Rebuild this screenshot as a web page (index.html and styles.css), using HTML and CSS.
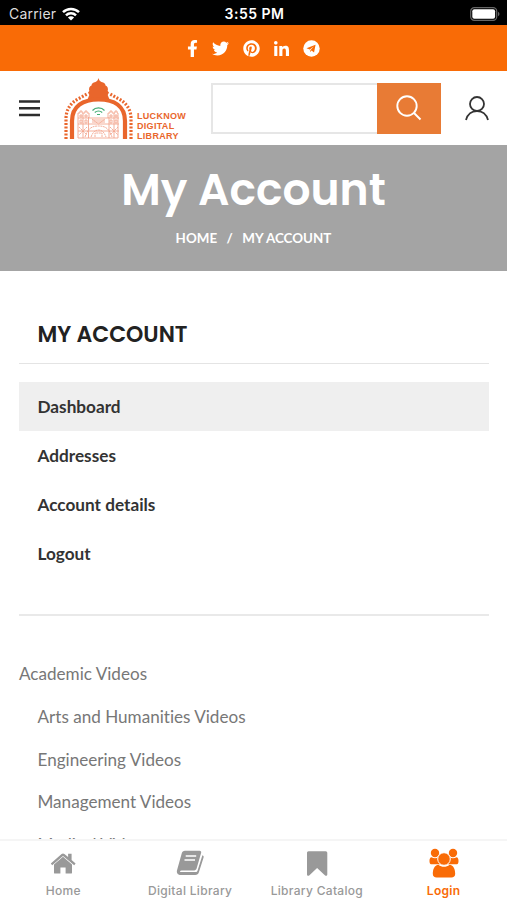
FILE: index.html
```html
<!DOCTYPE html>
<html lang="en">
<head>
  <meta charset="UTF-8">
  <meta name="viewport" content="width=device-width, initial-scale=1.0">
  <title>My Account - Lucknow Digital Library</title>
  <link rel="stylesheet" href="styles.css">
</head>
<body>
  <div class="status-bar">
    <div class="carrier">
      <span>Carrier</span>
      <svg class="wifi" viewBox="0 0 18 14" fill="none" stroke="#fff" stroke-width="2.5">
        <path d="M1 5.2a11.4 11.4 0 0 1 16 0"/>
        <path d="M4 8.4a7.1 7.1 0 0 1 10 0"/>
        <path d="M9 13.6L5.9 10.6a4.4 4.4 0 0 1 6.2 0z" fill="#fff" stroke="none"/>
      </svg>
    </div>
    <span class="time">3:55 PM</span>
    <div class="battery-wrap">
      <svg class="battery" viewBox="0 0 30 14">
        <rect x=".7" y=".7" width="26" height="12.6" rx="3.6" fill="none" stroke="#666" stroke-width="1.2"/>
        <rect x="2.3" y="2.2" width="22.8" height="9.6" rx="2" fill="#fff"/>
        <path d="M28 4.8c2 .8 2 3.6 0 4.400z" fill="#666"/>
      </svg>
    </div>
  </div>

  <div class="social-bar">
    <svg class="icon-fb" viewBox="0 0 320 512"><path d="M279.14 288l14.22-92.66h-88.91v-60.13c0-25.35 12.42-50.06 52.24-50.06h40.42V6.26S260.43 0 225.36 0c-73.22 0-121.08 44.38-121.08 124.72v70.62H22.89V288h81.39v224h100.17V288z"/></svg>
    <svg viewBox="0 0 512 512"><path d="M459.37 151.716c.325 4.548.325 9.097.325 13.645 0 138.72-105.583 298.558-298.558 298.558-59.452 0-114.68-17.219-161.137-47.106 8.447.974 16.568 1.299 25.34 1.299 49.055 0 94.213-16.568 130.274-44.832-46.132-.975-84.792-31.188-98.112-72.772 6.498.974 12.995 1.624 19.818 1.624 9.421 0 18.843-1.3 27.614-3.573-48.081-9.747-84.143-51.98-84.143-102.985v-1.299c13.969 7.797 30.214 12.67 47.431 13.319-28.264-18.843-46.781-51.005-46.781-87.391 0-19.492 5.197-37.36 14.294-52.954 51.655 63.675 129.3 105.258 216.365 109.807-1.624-7.797-2.599-15.918-2.599-24.04 0-57.828 46.782-104.934 104.934-104.934 30.213 0 57.502 12.67 76.67 33.137 23.715-4.548 46.456-13.32 66.599-25.34-7.798 24.366-24.366 44.833-46.132 57.827 21.117-2.273 41.584-8.122 60.426-16.243-14.292 20.791-32.161 39.308-52.628 54.253z"/></svg>
    <svg viewBox="0 0 496 512"><path d="M496 256c0 137-111 248-248 248-25.6 0-50.2-3.9-73.4-11.1 10.1-16.5 25.2-43.5 30.8-65 3-11.6 15.4-59 15.4-59 8.1 15.4 31.7 28.5 56.8 28.5 74.8 0 128.7-68.8 128.7-154.3 0-81.9-66.9-143.2-152.9-143.2-107 0-163.9 71.8-163.9 150.1 0 36.4 19.4 81.7 50.3 96.1 4.7 2.2 7.2 1.2 8.3-3.3.8-3.4 5-20.3 6.9-28.1.6-2.5.3-4.7-1.7-7.1-10.1-12.5-18.3-35.3-18.3-56.6 0-54.7 41.4-107.6 112-107.6 60.9 0 103.6 41.5 103.6 100.9 0 67.1-33.9 113.6-78 113.6-24.3 0-42.6-20.1-36.7-44.8 7-29.5 20.5-61.3 20.5-82.6 0-19-10.2-34.9-31.4-34.9-24.9 0-44.9 25.7-44.9 60.2 0 22 7.4 36.8 7.4 36.8s-24.5 103.8-29 123.2c-5 21.4-3 51.6-.9 71.2C65.4 450.9 0 361.1 0 256 0 119 111 8 248 8s248 111 248 248z"/></svg>
    <svg class="icon-in" viewBox="0 0 448 448"><path d="M100.28 448H7.4V148.9h92.88zM53.79 108.1C24.09 108.1 0 83.5 0 53.8a53.79 53.79 0 0 1 107.58 0c0 29.7-24.1 54.3-53.79 54.3zM447.9 448h-92.68V302.4c0-34.7-.7-79.2-48.29-79.2-48.29 0-55.69 37.7-55.69 76.7V448h-92.78V148.9h89.08v40.8h1.3c12.4-23.5 42.69-48.3 87.88-48.3 94 0 111.28 61.9 111.28 142.3V448z"/></svg>
    <svg viewBox="0 0 18 18"><circle cx="9" cy="9" r="8.7"/><path class="plane" d="M3.7 8.7L13.3 4.9 11.7 13.2 9 11.2 7.6 12.6 7.2 10.1z"/><path d="M7.2 10.1L11.6 6.5 7.9 10.6 7.6 12.3z"/></svg>
  </div>

  <header class="header">
    <svg class="menu-icon" viewBox="0 0 21 17"><path d="M0 1.500h21M0 8.300h21M0 15h21" stroke="#2d2d2d" stroke-width="2.400"/></svg>
    <div class="logo">
      <svg class="logo-arch" viewBox="0 0 72 64" fill="none" stroke="#e9662c">
        <!-- dome -->
        <path d="M35.500 2c.5 2 1.200 3 3 4 2.500.5 4 1.500 4 3.500 2 .8 3 3 2.200 5.500l1.300 1.500-1.300 2.500 1.800 4.500h-22l1.800-4.500L25 16.500l1.300-1.500c-.8-2.500.2-4.700 2.200-5.500 0-2 1.500-3 4-3.500 1.800-1 2.500-2 3-4z" fill="#e9662c" stroke="none"/>
        <!-- arch and beads -->
        <path d="M9 63V45C9 30 20 23.500 35.500 23.500S62 30 62 45v18" stroke-width="4.200"/>
        <path d="M3 63V43C3 34 7 27 16 22.500l9-5M68 63V43c0-9-4-16-13-20.500l-9-5" stroke-width="3.200" stroke-dasharray="1.900 1.600"/>
        <!-- gate -->
        <g stroke="#f3a68e" stroke-width=".9">
          <path d="M15 62V37h2v-2h2v2h3v-2h2v2h2v5h19v-5h2v-2h2v2h3v-2h2v2h1v25z"/>
          <path d="M15 42h11M45 42h11M15 48h41M15 55h41M20 37v25M25.500 41v21M46 41v21M51 37v25M29 44h13M29 46h13"/>
          <path d="M22 61c3-9 7-11 13.500-11S46 52 49 61M28 61c2-5 4-7 7.500-7s5.500 2 7.500 7M32 61v-4h7v4M16 51l8 8M24 51l-8 8M47 51l8 8M55 51l-8 8M29 43l6.500 5 6.500-5" stroke-dasharray="2 .6"/>
          <path d="M17 39h2v2h-2zM22 39h2v2h-2zM47 39h2v2h-2zM52 39h2v2h-2zM17 44h2v3h-2zM22 44h2v3h-2zM47 44h2v3h-2zM52 44h2v3h-2z"/>
        </g>
        <path d="M29.500 34.500c3-3.400 9-3.400 12 0M31.800 36.500c2-2 5.400-2 7.400 0M34 38.500h3" stroke="#45ad76" stroke-width="1.200"/>
      </svg>
      <div class="logo-text">
        <span>LUCKNOW</span>
        <span>DIGITAL</span>
        <span>LIBRARY</span>
      </div>
    </div>
    <div class="search">
      <input class="search-input" type="text">
      <button class="search-btn">
        <svg viewBox="0 0 26 26" fill="none" stroke="#fff" stroke-width="1.900"><circle cx="11" cy="11" r="9.700"/><path d="M18 18l6.500 6.500"/></svg>
      </button>
    </div>
    <svg class="user-icon" viewBox="0 0 24 25" fill="none" stroke="#333" stroke-width="1.800"><circle cx="12" cy="8" r="7"/><path d="M1 24c1.500-5.800 6-9 11-9s9.500 3.200 11 9"/></svg>
  </header>

  <section class="page-title">
    <h1>My Account</h1>
    <nav class="breadcrumbs">
      <span>HOME</span><span>/</span><span>MY ACCOUNT</span>
    </nav>
  </section>

  <main class="content">
    <h2>MY ACCOUNT</h2>
    <ul class="account-menu">
      <li class="active">Dashboard</li>
      <li>Addresses</li>
      <li>Account details</li>
      <li>Logout</li>
    </ul>
    <ul class="categories">
      <li class="parent">Academic Videos</li>
      <li>Arts and Humanities Videos</li>
      <li>Engineering Videos</li>
      <li>Management Videos</li>
      <li>Medical Videos</li>
    </ul>
  </main>

  <nav class="tab-bar">
    <a class="tab">
      <svg viewBox="0 0 30 30"><path d="M2.800 15.500L13.600 6c.9-.7 1.900-.7 2.800 0l3.700 3.100V5.800h3.500v6.300l4 3.400-1.400 1.800L15 7.900 4.200 17.300z"/><path d="M15 8.800l9 7.800v7.800c0 .8-.4 1.200-1.200 1.200h-5.200v-6.200h-5.200v6.200H7.200c-.8 0-1.200-.4-1.200-1.200v-7.800z"/></svg>
      <span>Home</span>
    </a>
    <a class="tab">
      <svg viewBox="0 0 30 30"><path d="M10 2.700h14.600c1.200 0 1.900 1 1.500 2.200l-4.500 15.700c-.3 1.200-1.200 1.800-2.400 1.800H6.500c-1.500 0-2 1.700-.6 1.700h14.800c1 0 1.500-.4 1.800-1.300l4.900-15.600c1.300.5 1.500 1.300 1.100 2.600l-4.600 14.500c-.6 1.800-1.700 2.800-3.600 2.800H5.700c-3 0-4.500-2.300-3.600-5L6.700 5.500C7.200 3.600 8.200 2.700 10 2.700z"/><path d="M10.700 8h10.500M9.500 12H20" stroke="#fff" stroke-width="1.400"/></svg>
      <span>Digital Library</span>
    </a>
    <a class="tab">
      <svg viewBox="0 0 30 30"><path d="M5 5.200C5 4 5.500 3.300 6.600 3.300h17c1.100 0 1.700.7 1.700 1.900v21.300c0 1.200-1.300 1.700-2.200.9L15.100 20l-7.900 7.400c-.9.800-2.200.3-2.200-.9z"/></svg>
      <span>Library Catalog</span>
    </a>
    <a class="tab active">
      <svg viewBox="0 0 30 30"><circle cx="6" cy="5" r="4.200"/><circle cx="24" cy="5" r="4.200"/><path d="M2.500 9.300c2 1.200 5 1.200 7 0l2 7H2C0 16.300-.2 9.300 2.500 9.300zM27.500 9.300c-2 1.200-5 1.200-7 0l-2 7H28c2 0 2.200-7-.5-7z"/><path d="M9.500 16.800c3 2.700 8 2.700 11 0 4 .2 5.700 4.700 5.700 9 0 2.500-1.500 3.700-3.800 3.700H7.600c-2.300 0-3.800-1.200-3.800-3.700 0-4.300 1.700-8.800 5.700-9z"/><circle cx="15" cy="11" r="6.300" stroke="#fff" stroke-width="1"/></svg>
      <span>Login</span>
    </a>
  </nav>
</body>
</html>
```

FILE: styles.css
```css
* {
  margin: 0;
  padding: 0;
  box-sizing: border-box;
}

body {
  height: 900px;
  display: flex;
  flex-direction: column;
  overflow: hidden;
  background: #fff;
  color: #777;
  font-family: Lato, sans-serif;
  font-variant-ligatures: none;
}

svg {
  display: block;
  flex: none;
}

ul {
  list-style: none;
}

.status-bar {
  height: 25px;
  flex: none;
  display: grid;
  grid-template-columns: 1fr auto 1fr;
  align-items: center;
  padding: 2px 7px 0 9px;
  background: #000;
  color: #fff;
  font-family: Inter, sans-serif;
  font-size: 14px;
}

.carrier {
  display: flex;
  align-items: center;
  gap: 6px;
  color: #ddd;
  letter-spacing: 0.200px;
}

.wifi {
  width: 18px;
  height: 14px;
}

.time {
  font-size: 14px;
  font-weight: 600;
  letter-spacing: 0.500px;
}

.battery-wrap {
  display: flex;
  justify-content: flex-end;
}

.battery {
  width: 30px;
  height: 14px;
}

.social-bar {
  height: 46px;
  flex: none;
  display: flex;
  align-items: center;
  justify-content: center;
  gap: 14px;
  background: #f96b06;
}

.social-bar svg {
  width: 17px;
  height: 17px;
  fill: #fff;
}

.social-bar .icon-fb {
  width: 11px;
}

.social-bar .icon-in {
  width: 15px;
  height: 15px;
}

.social-bar .plane {
  fill: #f96b06;
}

.header {
  height: 74px;
  flex: none;
  display: flex;
  align-items: center;
  padding: 0 18px 0 19px;
}

.menu-icon {
  width: 21px;
  height: 17px;
}

.logo {
  width: 148px;
  height: 64px;
  display: flex;
  margin: 0 0 0 23px;
}

.logo-arch {
  width: 72px;
  height: 64px;
}

.logo-text {
  display: flex;
  flex-direction: column;
  align-items: flex-start;
  padding: 35px 0 0 2px;
  color: #e9662c;
  font: bold 9px/10px "Liberation Sans", sans-serif;
  letter-spacing: 0.300px;
}

.search {
  width: 230px;
  height: 51px;
  display: flex;
}

.search-input {
  width: 166px;
  border: 2px solid #e6e6e6;
  border-right: 0;
  background: #fff;
}

.search-btn {
  width: 64px;
  display: flex;
  align-items: center;
  justify-content: center;
  border: 0;
  background: #e87b35;
}

.search-btn svg {
  width: 26px;
  height: 26px;
}

.user-icon {
  width: 24px;
  height: 25px;
  margin-left: auto;
}

.page-title {
  height: 126px;
  flex: none;
  padding-top: 18px;
  background: #a4a4a4;
  color: #fff;
  text-align: center;
}

.page-title h1 {
  font: 600 44px/54px Poppins, Inter, sans-serif;
}

.breadcrumbs {
  display: flex;
  justify-content: center;
  gap: 9.500px;
  margin-top: 12px;
  font-size: 13.400px;
  font-weight: 700;
  line-height: 18px;
}

.content {
  flex: 1;
  min-height: 0;
  overflow: hidden;
  padding: 45px 18px 0 19px;
}

.content h2 {
  height: 48px;
  padding: 1px 0 0 18.500px;
  border-bottom: 1px solid #e4e4e4;
  color: #222;
  font: 600 22px/36px Poppins, Inter, sans-serif;
}

.account-menu {
  margin-top: 18px;
  padding-bottom: 36px;
  border-bottom: 2px solid #e9e9e9;
}

.account-menu li {
  height: 49px;
  padding-left: 18.500px;
  color: #333;
  font-size: 17.200px;
  font-weight: 700;
  line-height: 49px;
}

.account-menu .active {
  background: #efefef;
}

.categories {
  padding-top: 37px;
}

.categories li {
  height: 42.800px;
  padding-left: 18.500px;
  font-size: 17.100px;
  line-height: 42px;
}

.categories .parent {
  padding-left: 0;
}

.tab-bar {
  height: 61px;
  flex: none;
  display: grid;
  grid-template-columns: repeat(4, 1fr);
  border-top: 2px solid #f5f5f5;
  background: #fff;
}

.tab {
  display: flex;
  flex-direction: column;
  align-items: center;
  padding-top: 7px;
  color: #999;
  font: 500 12px/16px Inter, sans-serif;
  letter-spacing: 0.300px;
}

.tab svg {
  width: 30px;
  height: 30px;
  margin-bottom: 5px;
  fill: #999;
}

.tab.active {
  color: #f96b06;
  font-weight: 600;
}

.tab.active svg {
  fill: #f96b06;
}
```
